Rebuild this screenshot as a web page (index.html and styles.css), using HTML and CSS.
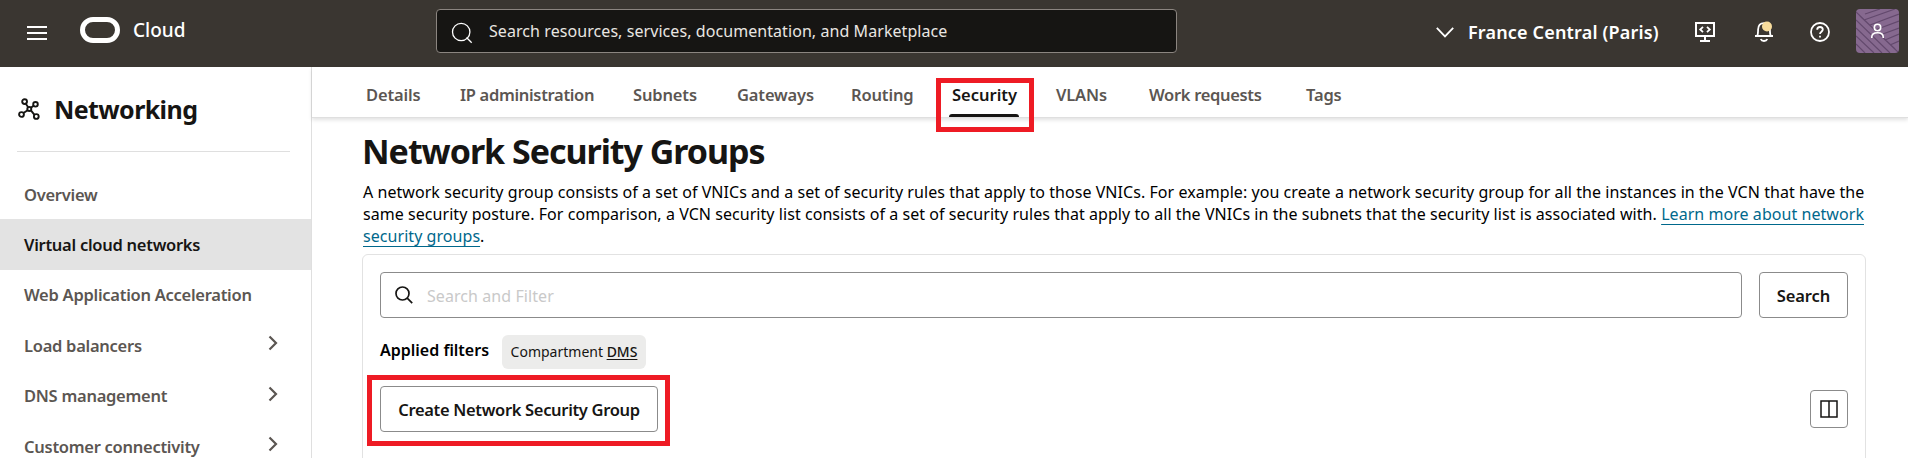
FILE: index.html
```html
<!DOCTYPE html>
<html lang="en">
<head>
<meta charset="utf-8">
<title>Network Security Groups</title>
<link rel="stylesheet" href="styles.css">
</head>
<body>
<header class="topbar">
  <svg class="menu" width="20" height="14" viewBox="0 0 20 14" fill="#fff"><path d="M0 0h20v2H0zM0 6h20v2H0zM0 12h20v2H0z"/></svg>
  <svg class="logo" width="40" height="26" viewBox="0 0 40 26" fill="none" stroke="#fff" stroke-width="5"><rect x="2.5" y="2.5" width="35" height="21" rx="10.5"/></svg>
  <span class="brand">Cloud</span>
  <div class="search">
    <svg width="22" height="22" viewBox="0 0 22 22" fill="none" stroke="#fff" stroke-width="1.3"><circle cx="10.2" cy="10" r="8.7"/><path d="M15.5 15.5l5.2 5.2"/></svg>
    <span class="search-text">Search resources, services, documentation, and Marketplace</span>
  </div>
  <div class="region">
    <svg width="18" height="11" viewBox="0 0 18 11" fill="none" stroke="#fff" stroke-width="1.8"><path d="M.8 .8L9 9.4 17.2.8"/></svg>
    <span class="region-name">France Central (Paris)</span>
  </div>
  <div class="tools">
    <svg width="20" height="20" viewBox="0 0 20 20" fill="none" stroke="#fff"><path d="M1 1h18v13H1zM10 14v5M5 19h10" stroke-width="2"/><path d="M8 4.8L5.2 7.5 8 10.2M12 4.8l2.8 2.7L12 10.2" stroke-width="1.8"/></svg>
    <svg class="bell" width="20" height="22" viewBox="0 0 20 22" fill="none" stroke="#fff" stroke-width="1.8"><path d="M1 15h18M3.2 15c1-2 .8-4 .9-6.500C4.3 4.500 6.8 2.200 10 2.200s5.700 2.300 5.900 6.300c.1 2.500-.1 4.500.9 6.500"/><path d="M6.700 18c.6 1.400 1.800 2 3.300 2s2.700-.6 3.300-2"/><circle cx="13" cy="5.500" r="5" fill="#f7dc9c" stroke="none"/></svg>
    <svg class="help" width="20" height="20" viewBox="0 0 20 20" fill="none" stroke="#fff" stroke-width="1.8"><circle cx="10" cy="10" r="9"/><path d="M7.200 7.800C7.200 6 8.400 5 10 5s2.800 1 2.800 2.600c0 2-2.800 2.200-2.800 4.400M10 13.700v1.900"/></svg>
    <svg class="avatar" width="43" height="44" viewBox="0 0 43 44" fill="none">
      <rect width="43" height="44" fill="#86698f"/>
      <path stroke="#63496d" stroke-width="1.2" d="M0 3l43 41M0 11l34 33M0 19l26 25M0 27l18 17M0 35l9 9M9 5L24 0M8 11L39 0M14 16L43 5M19 21l24-9M24 26l19-7M29 31l14-6M34 36l9-4M4 7l35 33"/>
      <g stroke="#fff" stroke-width="1.6"><circle cx="21.500" cy="18.500" r="3.200"/><path d="M15.800 29v-1c0-3 2.500-4.300 5.700-4.300s5.700 1.300 5.700 4.300v1"/></g>
    </svg>
  </div>
</header>
<div class="page">
  <aside class="sidebar">
    <div class="service">
      <svg width="22" height="22" viewBox="0 0 22 22" fill="none" stroke="#161513" stroke-width="1.9"><circle cx="6.600" cy="3.600" r="2.400"/><circle cx="17.500" cy="6.300" r="2.300"/><circle cx="11.300" cy="11" r="2"/><circle cx="3.500" cy="16.500" r="2.400"/><circle cx="18.300" cy="18.500" r="2.400"/><path d="M7.800 5.700l2.400 3.600M15.600 7.700l-2.700 2.100M9.600 12.200l-4.100 2.800M12.900 12.300l3.600 4.600"/></svg>
      <span class="service-name">Networking</span>
    </div>
    <nav class="nav">
      <a class="nav-item">Overview</a>
      <a class="nav-item active">Virtual cloud networks</a>
      <a class="nav-item">Web Application Acceleration</a>
      <a class="nav-item">Load balancers<svg class="chev" width="10" height="16" viewBox="0 0 10 16"><path d="M1.500 1.500L8 8l-6.500 6.500"/></svg></a>
      <a class="nav-item">DNS management<svg class="chev" width="10" height="16" viewBox="0 0 10 16"><path d="M1.500 1.500L8 8l-6.500 6.500"/></svg></a>
      <a class="nav-item">Customer connectivity<svg class="chev" width="10" height="16" viewBox="0 0 10 16"><path d="M1.500 1.500L8 8l-6.500 6.500"/></svg></a>
    </nav>
  </aside>
  <main class="main">
    <nav class="tabs">
      <a class="tab">Details</a>
      <a class="tab wide">IP administration</a>
      <a class="tab">Subnets</a>
      <a class="tab">Gateways</a>
      <a class="tab">Routing</a>
      <a class="tab selected">Security<i class="callout tab-callout"></i></a>
      <a class="tab">VLANs</a>
      <a class="tab wide">Work requests</a>
      <a class="tab">Tags</a>
    </nav>
    <div class="content">
      <h1 class="title">Network Security Groups</h1>
      <p class="intro"><span>A network security group consists of a set of VNICs and a set of security rules that apply to those VNICs. For example: you create a network security group for all the instances in the VCN that have the</span><br><span>same security posture. For comparison, a VCN security list consists of a set of security rules that apply to all the VNICs in the subnets that the security list is associated with. <a class="link">Learn more about network</a></span><br><span><a class="link">security groups</a>.</span></p>
      <section class="card">
        <div class="filter-row">
          <div class="filter-input">
            <svg width="18" height="18" viewBox="0 0 18 18" fill="none" stroke="#161513" stroke-width="1.7"><circle cx="7.500" cy="7.500" r="6.500"/><path d="M12.200 12.200l5 5"/></svg>
            <span class="placeholder">Search and Filter</span>
          </div>
          <button class="btn search-btn">Search</button>
        </div>
        <div class="applied"><span class="applied-label">Applied filters</span><span class="chip">Compartment <u>DMS</u></span></div>
        <div class="actions">
          <button class="btn create">Create Network Security Group<i class="callout create-callout"></i></button>
          <button class="columns"><svg width="18" height="18" viewBox="0 0 18 18" fill="none" stroke="#161513" stroke-width="1.5"><path d="M1 1h16v16H1zM9 1v16"/></svg></button>
        </div>
      </section>
    </div>
  </main>
</div>
</body>
</html>
```
FILE: styles.css
```css
* { box-sizing: border-box; }
body {
  margin: 0;
  width: 1908px;
  height: 458px;
  overflow: hidden;
  background: #fff;
  color: #000;
  font-family: "Noto Sans", "Open Sans", sans-serif;
  font-size: 16px;
}
svg { display: block; flex: none; }
span, a, button, h1 { white-space: nowrap; }

.topbar {
  display: flex;
  align-items: flex-start;
  height: 67px;
  padding: 9px 9px 0 27px;
  background: #3a3631;
  color: #fff;
}
.menu { margin-top: 17px; }
.logo { margin: 8px 0 0 33px; }
.brand { width: 303px; margin: 7px 0 0 13px; font-size: 19px; line-height: 28px; font-weight: 500; }
.search {
  display: flex;
  align-items: center;
  width: 741px;
  height: 44px;
  padding: 3px 0 0 14px;
  gap: 16px;
  background: #161513;
  border: 1px solid #8b8580;
  border-radius: 4px;
}
.search-text { margin-top: -3px; color: #e9e6e2; letter-spacing: .07px; }
.region { display: flex; align-items: center; gap: 14px; height: 46px; margin-left: 259px; }
.region-name { width: 227px; font-size: 18px; font-weight: 600; letter-spacing: .17px; }
.tools { display: flex; }
.tools > svg { margin-top: 13px; }
.tools > .bell { margin: 12px 0 0 39px; }
.tools > .help { margin-left: 36px; }
.tools > .avatar { margin: 0 0 0 26px; border-radius: 4px; }

.page { display: flex; height: 391px; }
.sidebar { width: 312px; border-right: 1px solid #dfdfdf; }
.service {
  display: flex;
  align-items: center;
  gap: 14px;
  height: 85px;
  margin: 0 21px 0 17px;
  padding: 0 0 1px 1px;
  border-bottom: 1px solid #dfdfdf;
}
.service-name { font-size: 25px; font-weight: 700; color: #161513; letter-spacing: -.6px; }
.nav { padding-top: 17px; }
.nav-item {
  display: flex;
  align-items: center;
  justify-content: space-between;
  height: 50.4px;
  padding: 0 33px 0 24px;
  color: #5b5652;
  font-size: 16.5px;
  font-weight: 600;
  letter-spacing: -.27px;
}
.nav-item.active { background: #e3e3e3; color: #161513; }
.chev { margin-top: -4px; fill: none; stroke: #5b5652; stroke-width: 2.2; }

.main { flex: 1; }
.tabs {
  display: grid;
  grid-template-columns: 94px 173px 104px 114px 101px 104px 93px 157px auto;
  height: 51px;
  padding-left: 54px;
  border-bottom: 1px solid #dfdfdf;
  box-shadow: 0 2px 4px rgba(0, 0, 0, .12);
}
.tab { position: relative; font-size: 16.5px; line-height: 56px; font-weight: 600; color: #5b5652; letter-spacing: -.15px; }
.tab.wide { letter-spacing: -.32px; }
.tab.selected { color: #161513; letter-spacing: 0; }
.tab.selected::after {
  content: "";
  position: absolute;
  left: -3px;
  top: 47px;
  width: 70px;
  height: 3px;
  background: #161513;
  border-radius: 3px 3px 0 0;
}
.callout { position: absolute; z-index: 2; border: 5px solid #ee1b24; }
.tab-callout { left: -16px; top: 11px; width: 98px; height: 54px; }

.content { padding: 10px 42px 0 50px; }
.title { margin: 0; font-size: 34px; line-height: 46px; font-weight: 700; color: #161513; letter-spacing: -1.03px; }
.intro { margin: 7px 0 0 1px; line-height: 22px; font-size: 16px; letter-spacing: .054px; }
.link { color: #00688c; text-decoration: underline; text-underline-offset: 4px; text-decoration-thickness: 1px; }
.card {
  height: 210px;
  margin-top: 7px;
  padding: 17px;
  border: 1px solid #e2e2e2;
  border-radius: 6px;
}
.filter-row { display: flex; gap: 17px; }
.filter-input {
  display: flex;
  align-items: center;
  flex: 1;
  gap: 14px;
  height: 46px;
  padding-left: 14px;
  border: 1px solid #8b8b8b;
  border-radius: 4px;
  color: #c9c9c9;
}
.placeholder { padding-top: 1px; letter-spacing: .07px; }
.btn {
  position: relative;
  height: 46px;
  padding: 0;
  border: 1px solid #8b8b8b;
  border-radius: 4px;
  background: #fff;
  color: #161513;
  font: 600 16.5px "Noto Sans", sans-serif;
}
.search-btn { width: 89px; letter-spacing: -.1px; }
.applied { display: flex; gap: 12px; height: 34px; margin-top: 17px; }
.applied-label { width: 110px; line-height: 31px; font-weight: 600; }
.chip {
  width: 144px;
  height: 34px;
  line-height: 34px;
  text-align: center;
  background: #ececeb;
  border-radius: 6px;
  font-size: 14px;
  color: #161513;
}
.chip u { text-underline-offset: 2px; font-weight: 500; }
.actions { display: flex; justify-content: space-between; align-items: flex-start; margin-top: 17px; }
.create { width: 278px; letter-spacing: -.33px; }
.create-callout { left: -14px; top: -12px; width: 303px; height: 71px; }
.columns {
  display: flex;
  align-items: center;
  justify-content: center;
  width: 38px;
  height: 38px;
  margin-top: 4px;
  padding: 0;
  border: 1px solid #8b8b8b;
  border-radius: 4px;
  background: #fff;
}
```
